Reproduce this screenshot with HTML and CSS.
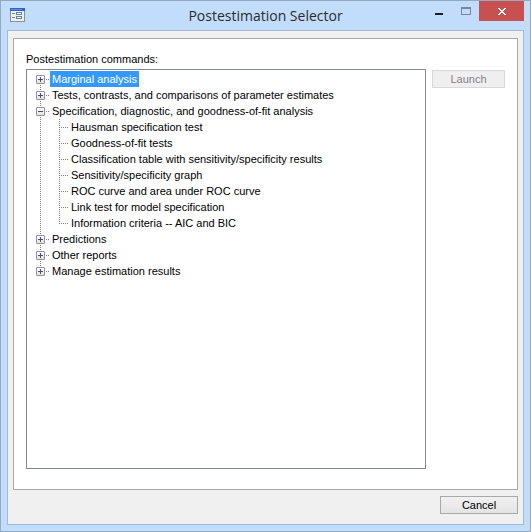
FILE: index.html
```
<!DOCTYPE html>
<html lang="en">
  <head>
    <meta charset="UTF-8" />
    <meta name="viewport" content="width=device-width, initial-scale=1.0" />
    <title>Postestimation Selector</title>
    <link rel="stylesheet" href="styles.css">
  </head>
  <body>
    <div class="window">
      <header class="titlebar">
        <svg class="app-icon" width="15" height="14" viewBox="0 0 15 14" shape-rendering="crispEdges" aria-hidden="true">
          <rect width="15" height="14" fill="#8d8f92" />
          <rect x="1" y="1" width="13" height="12" fill="#f1efe2" />
          <rect width="15" height="3" fill="#2f62c9" />
          <rect x="1" y="1" width="11" height="1" fill="#5b8ce6" />
          <rect x="2" y="5" width="3" height="1" fill="#5f87b0" />
          <rect x="2" y="9" width="3" height="1" fill="#5f87b0" />
          <rect x="6" y="4" width="6" height="3" fill="#5f87b0" />
          <rect x="7" y="5" width="4" height="1" fill="#fff" />
          <rect x="6" y="8" width="6" height="3" fill="#5f87b0" />
          <rect x="7" y="9" width="4" height="1" fill="#fff" />
        </svg>
        <h1>Postestimation Selector</h1>
        <div class="window-buttons">
          <button type="button" class="minimize" aria-label="Minimize">
            <svg width="10" height="8" viewBox="0 0 10 8" shape-rendering="crispEdges"><path d="M1 6h8v2H1z" fill="#1e1e1e" /></svg>
          </button>
          <button type="button" class="maximize" aria-label="Maximize" disabled>
            <svg width="10" height="8" viewBox="0 0 10 8" shape-rendering="crispEdges"><path d="M0 0h10v8H0zM1 2v5h8V2z" fill="#7a8796" fill-rule="evenodd" /></svg>
          </button>
          <button type="button" class="close" aria-label="Close">
            <svg width="8" height="7" viewBox="0 0 8 7" shape-rendering="crispEdges"><path d="M0 0h2v1h1v1h2V1h1V0h2v1H7v1H6v1H5v1h1v1h1v1h1v1H6V6H5V5H3v1H2v1H0V6h1V5h1V4h1V3H2V2H1V1H0z" fill="#fff" /></svg>
          </button>
        </div>
      </header>

      <main class="client">
        <section class="panel">
          <p class="caption" id="tree-caption">Postestimation commands:</p>
          <div class="columns">
            <div class="tree-box">
              <ul class="tree" role="tree" aria-labelledby="tree-caption">
                <li role="treeitem" aria-expanded="false" aria-selected="true">
                  <div class="row"><button type="button" class="expander" aria-labelledby="marginal"></button><span class="label selected" id="marginal">Marginal analysis</span></div>
                </li>
                <li role="treeitem" aria-expanded="false">
                  <div class="row"><button type="button" class="expander" aria-labelledby="tests"></button><span class="label" id="tests">Tests, contrasts, and comparisons of parameter estimates</span></div>
                </li>
                <li role="treeitem" aria-expanded="true">
                  <div class="row"><button type="button" class="expander open" aria-labelledby="spec"></button><span class="label" id="spec">Specification, diagnostic, and goodness-of-fit analysis</span></div>
                  <ul class="children" role="group">
                    <li role="treeitem"><span class="label">Hausman specification test</span></li>
                    <li role="treeitem"><span class="label">Goodness-of-fit tests</span></li>
                    <li role="treeitem"><span class="label">Classification table with sensitivity/specificity results</span></li>
                    <li role="treeitem"><span class="label">Sensitivity/specificity graph</span></li>
                    <li role="treeitem"><span class="label">ROC curve and area under ROC curve</span></li>
                    <li role="treeitem"><span class="label">Link test for model specification</span></li>
                    <li role="treeitem"><span class="label">Information criteria -- AIC and BIC</span></li>
                  </ul>
                </li>
                <li role="treeitem" aria-expanded="false">
                  <div class="row"><button type="button" class="expander" aria-labelledby="predictions"></button><span class="label" id="predictions">Predictions</span></div>
                </li>
                <li role="treeitem" aria-expanded="false">
                  <div class="row"><button type="button" class="expander" aria-labelledby="reports"></button><span class="label" id="reports">Other reports</span></div>
                </li>
                <li role="treeitem" aria-expanded="false">
                  <div class="row"><button type="button" class="expander" aria-labelledby="manage"></button><span class="label" id="manage">Manage estimation results</span></div>
                </li>
              </ul>
            </div>
            <button type="button" class="button launch" disabled>Launch</button>
          </div>
        </section>
        <footer class="footer">
          <button type="button" class="button cancel">Cancel</button>
        </footer>
      </main>
    </div>
    <script src="script.js"></script>
  </body>
</html>
```
FILE: styles.css
```
* {
  box-sizing: border-box;
}
body {
  margin: 0;
  font-family: "Liberation Sans", Arial, sans-serif;
  font-size: 11px;
  line-height: 16px;
  color: #000;
}
button {
  margin: 0;
  padding: 0;
  font: inherit;
}
ul {
  list-style: none;
  margin: 0;
  padding: 0;
}

/* Window frame */
.window {
  display: flex;
  flex-direction: column;
  min-height: 100vh;
  padding: 0 6px 6px;
  background-color: #c2ddfb;
  border: 1px solid #93a9c1;
}
.titlebar {
  display: grid;
  grid-template-columns: 1fr auto 1fr;
  height: 29px;
}
.app-icon {
  margin: 7px 0 0 3px;
}
.titlebar h1 {
  margin: 0;
  font-family: "Open Sans", "Segoe UI", sans-serif;
  font-size: 14px;
  font-weight: 400;
  line-height: 29px;
  color: #2b2b2b;
}
.window-buttons {
  display: flex;
  justify-content: flex-end;
  align-items: flex-start;
}
.window-buttons button {
  display: flex;
  justify-content: center;
  width: 27px;
  height: 20px;
  padding-top: 6px;
  border: none;
  background: none;
}
.window-buttons .close {
  width: 45px;
  padding-top: 7px;
  background-color: #c75050;
}

/* Dialog body */
.client {
  flex: 1;
  display: flex;
  flex-direction: column;
  padding: 7px 5px 10px;
  background-color: #f0f0f0;
  border: 1px solid #a2bad4;
}
.panel {
  flex: 1;
  display: flex;
  flex-direction: column;
  padding: 12px 12px 20px;
  background-color: #fff;
  border: 1px solid #a9a9a9;
}
.caption {
  margin: 0 0 2px;
}
.columns {
  flex: 1;
  display: flex;
  align-items: flex-start;
  gap: 6px;
}
.tree-box {
  flex: 1;
  align-self: stretch;
  padding: 1px 9px;
  border: 1px solid #828790;
}
.button {
  height: 18px;
  line-height: 16px;
  border: 1px solid #a9a9a9;
  background: linear-gradient(#f1f1f1, #e4e4e4);
}
.button:disabled {
  color: #838383;
  border-color: #d9d9d9;
  background: #efefef;
}
.launch {
  width: 73px;
  margin-top: 1px;
}
.footer {
  display: flex;
  justify-content: flex-end;
  padding-top: 6px;
}
.cancel {
  width: 78px;
}

/* Tree, the dotted guides are gradients */
.tree > li {
  background: repeating-linear-gradient(#808080 0 1px, transparent 1px 2px) 4px 0 / 1px 100% no-repeat;
}
.tree > li:first-child {
  background-position: 4px 8px;
}
.tree > li:last-child {
  background-size: 1px 8px;
}
.row {
  display: flex;
  align-items: center;
  height: 16px;
  background: repeating-linear-gradient(90deg, #808080 0 1px, transparent 1px 2px) 10px 8px / 4px 1px no-repeat;
}
.expander {
  width: 9px;
  height: 9px;
  margin-right: 5px;
  border: 1px solid #919191;
  border-radius: 1px;
  background:
    linear-gradient(#3b4f96, #3b4f96) center / 5px 1px no-repeat,
    linear-gradient(#3b4f96, #3b4f96) center / 1px 5px no-repeat,
    linear-gradient(#fff, #e2e2e2);
}
.expander.open {
  background:
    linear-gradient(#3b4f96, #3b4f96) center / 5px 1px no-repeat,
    linear-gradient(#fff, #e2e2e2);
}
.label {
  padding: 0 2px;
  white-space: nowrap;
}
.selected {
  color: #fff;
  background-color: #3399ff;
}
.children > li {
  height: 16px;
  padding-left: 33px;
  background:
    repeating-linear-gradient(#808080 0 1px, transparent 1px 2px) 23px 0 / 1px 100% no-repeat,
    repeating-linear-gradient(90deg, #808080 0 1px, transparent 1px 2px) 25px 8px / 7px 1px no-repeat;
}
.children > li:last-child {
  background-size: 1px 9px, 7px 1px;
}
```
FILE: script.js
```
// Clicking a label moves the selection, clicking an expander folds its group
const labels = document.querySelectorAll(".label");

labels.forEach((label) => {
  label.addEventListener("click", () => {
    labels.forEach((other) => other.classList.remove("selected"));
    label.classList.add("selected");
  });
});

document.querySelectorAll(".expander").forEach((expander) => {
  expander.addEventListener("click", () => {
    const item = expander.closest("li");
    const group = item.querySelector(".children");
    if (!group) return;
    const open = expander.classList.toggle("open");
    group.hidden = !open;
    item.setAttribute("aria-expanded", open);
  });
});
```
